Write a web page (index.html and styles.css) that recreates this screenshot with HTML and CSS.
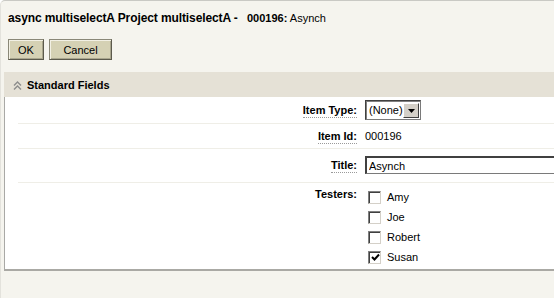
FILE: index.html
```html
<!DOCTYPE html>
<html lang="en">
  <head>
    <meta charset="UTF-8" />
    <title>async multiselectA - 000196</title>
    <link rel="stylesheet" href="styles.css">
  </head>
  <body>
    <div class="page">
      <h1 class="item-title">async multiselectA Project multiselectA - <span class="item-key"><b>000196:</b> Asynch</span></h1>

      <div class="toolbar">
        <button type="button" class="btn btn-ok">OK</button>
        <button type="button" class="btn btn-cancel">Cancel</button>
      </div>

      <section class="panel">
        <div class="panel-head">
          <svg class="collapse-icon" width="9" height="9" viewBox="0 0 9 9">
            <polyline points="1,4.5 4.5,1 8,4.5" fill="none" stroke="#8c8c8c" stroke-width="1.4" />
            <polyline points="1,8.5 4.5,5 8,8.5" fill="none" stroke="#8c8c8c" stroke-width="1.4" />
          </svg>
          <span>Standard Fields</span>
        </div>

        <div class="fields">
          <div class="field-row row-type">
            <label class="field-label"><span class="dotted">Item Type:</span></label>
            <div class="field-value">
              <div class="select">
                <span class="select-text">(None)</span>
                <span class="select-btn">
                  <svg width="7" height="4" viewBox="0 0 7 4"><polygon points="0,0 7,0 3.5,4" fill="#000" /></svg>
                </span>
              </div>
            </div>
          </div>

          <div class="field-row row-id">
            <label class="field-label"><span class="dotted">Item Id:</span></label>
            <div class="field-value">000196</div>
          </div>

          <div class="field-row row-title">
            <label class="field-label"><span class="dotted">Title:</span></label>
            <div class="field-value">
              <input type="text" class="text-input" value="Asynch" />
            </div>
          </div>

          <div class="field-row row-testers">
            <label class="field-label">Testers:</label>
            <div class="field-value">
              <ul class="check-list">
                <li><span class="box"></span>Amy</li>
                <li><span class="box"></span>Joe</li>
                <li><span class="box"></span>Robert</li>
                <li>
                  <span class="box">
                    <svg width="9" height="9" viewBox="0 0 9 9"><polyline points="1,4 3.5,6.5 8,1.5" fill="none" stroke="#000" stroke-width="2" /></svg>
                  </span>Susan
                </li>
              </ul>
            </div>
          </div>
        </div>
      </section>
    </div>
  </body>
</html>
```

FILE: styles.css
```css
:root {
  --page-bg: #f5f4ee;
  --head-bg: #e5e1d6;
  --btn-bg: #d5d1b4;
  --line: #efeee7;
  --dark-text: #000;
}
* { box-sizing: border-box; margin: 0; padding: 0; }
html, body { height: 100%; overflow: hidden; }
body { font-family: "Liberation Sans", Arial, sans-serif; font-size: 11px; color: var(--dark-text); background: #fff; }

.page { height: 100%; background: var(--page-bg); border-top: 1px solid #c9c9c4; border-left: 1px solid #e3e2dc; border-top-left-radius: 5px; }

.item-title { font-size: 12px; font-weight: bold; padding: 10px 0 0 7px; line-height: 14px; height: 38px; letter-spacing: -0.1px; }
.item-key { font-size: 11px; font-weight: normal; margin-left: 6px; letter-spacing: 0; }

.toolbar { display: flex; gap: 5px; padding-left: 7px; height: 33px; }
.btn { height: 21px; font-family: inherit; font-size: 11px; background: var(--btn-bg); border: 1px solid #5c5a4c; border-top-color: #8a8878; border-left-color: #8a8878; box-shadow: inset 1px 1px 0 #f2f0e4, inset -1px -1px 0 #a9a68e; color: #000; }
.btn-ok { width: 36px; }
.btn-cancel { width: 63px; }

.panel { margin-left: 3px; }
.panel-head { height: 25px; background: var(--head-bg); display: flex; align-items: center; gap: 5px; padding-left: 9px; font-size: 11px; font-weight: bold; }
.collapse-icon { display: block; margin-top: 1px; }

.fields { background: #fff; border-left: 1px solid #a9a9a6; border-bottom: 2px solid #aaa9a4; padding-left: 13px; }
.field-row { display: grid; grid-template-columns: 339px 1fr; column-gap: 8px; border-bottom: 1px solid var(--line); line-height: 14px; }
.field-row:last-child { border-bottom: none; }
.field-label { text-align: right; font-weight: bold; }
.dotted { border-bottom: 1px dotted #9a9a9a; padding-bottom: 1px; }

.row-type { padding: 3px 0; align-items: center; height: 27px; }
.row-id { padding: 5px 0; height: 25px; align-items: center; }
.row-title { padding: 6px 0 8px; height: 34px; align-items: center; }
.row-testers { padding: 4px 0 2px; }

.select { display: flex; width: 56px; height: 20px; border: 1px solid #7a7a7a; border-top-color: #404040; border-left-color: #404040; box-shadow: inset 1px 1px 0 #808080; background: #fff; }
.select-text { flex: 1; padding: 2px 0 0 3px; font-size: 11px; }
.select-btn { width: 16px; margin: 2px 1px 1px 0; background: #d4d0c8; border: 1px solid #fff; border-right-color: #404040; border-bottom-color: #404040; display: flex; align-items: center; justify-content: center; }
.select-btn svg { display: block; }

.text-input { display: block; width: 100%; height: 18px; font-family: inherit; font-size: 11px; padding: 1px 2px 0; border: 1px solid #7a7a7a; border-top: 2px solid #404040; border-left: 2px solid #404040; border-right: none; outline: none; color: #000; }

.check-list { list-style: none; }
.check-list li { display: flex; align-items: center; height: 20px; padding-left: 3px; gap: 6px; }
.box { width: 13px; height: 13px; border: 1px solid #d4d0c8; border-top-color: #808080; border-left-color: #808080; box-shadow: inset 1px 1px 0 #404040; background: #fff; display: flex; align-items: center; justify-content: center; }
.box svg { display: block; margin: 1px 0 0 1px; }
```
